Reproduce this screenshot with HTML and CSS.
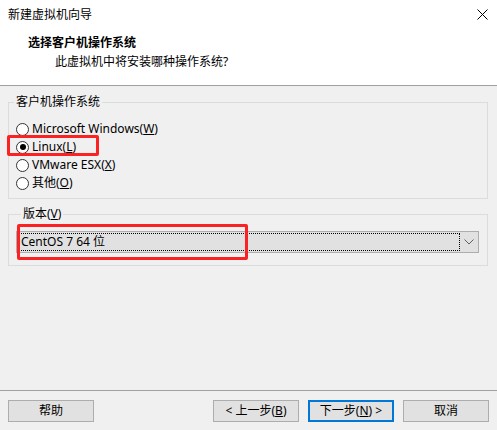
FILE: index.html
```html
<!DOCTYPE html>
<html lang="zh-CN">
<head>
    <meta charset="UTF-8">
    <title>新建虚拟机向导</title>
    <link rel="stylesheet" href="styles.css">
</head>
<body>

    <!-- Header -->
    <header class="header">
        <div class="titlebar">
            <span class="title">新建虚拟机向导</span>
            <svg class="close" width="11" height="11" viewBox="0 0 11 11">
                <path d="M0.5 0.5 L10.5 10.5 M10.5 0.5 L0.5 10.5" stroke="#000" stroke-width="1" fill="none"/>
            </svg>
        </div>
        <h1 class="heading">选择客户机操作系统</h1>
        <p class="subheading">此虚拟机中将安装哪种操作系统?</p>
    </header>

    <main class="content">
        <fieldset class="group os-group">
            <legend>客户机操作系统</legend>
            <div class="radio-row"><span class="radio"></span>Microsoft Windows(<u>W</u>)</div>
            <div class="radio-row marked"><span class="radio checked"></span>Linux(<u>L</u>)<span class="mark mark-linux"></span></div>
            <div class="radio-row"><span class="radio"></span>VMware ESX(<u>X</u>)</div>
            <div class="radio-row"><span class="radio"></span>其他(<u>O</u>)</div>
        </fieldset>

        <fieldset class="group version-group">
            <legend>版本(<u>V</u>)</legend>
            <div class="select">
                <div class="select-value">CentOS 7 64 位</div>
                <div class="select-arrow">
                    <svg width="10" height="6" viewBox="0 0 10 6">
                        <path d="M0.5 0.5 L5 5 L9.5 0.5" stroke="#606060" stroke-width="1" fill="none"/>
                    </svg>
                </div>
                <span class="mark mark-version"></span>
            </div>
        </fieldset>
    </main>

    <footer class="footer">
        <button class="btn">帮助</button>
        <div class="nav-buttons">
            <button class="btn">&lt; 上一步(<u>B</u>)</button>
            <button class="btn default">下一步(<u>N</u>) &gt;</button>
            <button class="btn">取消</button>
        </div>
    </footer>

</body>
</html>
```

FILE: styles.css
```css
html, body {
    margin: 0;
    padding: 0;
}

body {
    width: 497px;
    height: 430px;
    display: flex;
    flex-direction: column;
    background-color: #f0f0f0;
    font-family: "Noto Sans", "Noto Sans CJK SC", sans-serif;
    font-size: 12px;
    line-height: 16px;
    color: #000;
    overflow: hidden;
}

/* Header */
.header {
    height: 85px;
    background-color: #fff;
    border-bottom: 1px solid #a0a0a0;
}

.titlebar {
    height: 29px;
    display: flex;
    align-items: center;
    justify-content: space-between;
    padding: 0 9px 0 8px;
}

.close {
    display: block;
}

.heading {
    margin: 6px 0 0 28px;
    font-size: 12px;
    line-height: 16px;
    font-weight: bold;
}

.subheading {
    margin: 3px 0 0 55px;
}

/* Content */
.content {
    flex: 1;
    padding: 0 9px 0 8px;
}

.group {
    margin: 0;
    padding: 0;
    border: 1px solid #dcdcdc;
}

.group legend {
    margin-left: 5px;
    padding: 0 2px;
    line-height: 16px;
}

.os-group {
    margin-top: 8px;
    padding: 10px 0 6px 0;
}

.radio-row {
    position: relative;
    height: 18px;
    display: flex;
    align-items: center;
    padding-left: 7px;
}

.radio {
    width: 11px;
    height: 11px;
    border: 1px solid #333;
    border-radius: 50%;
    background-color: #fff;
    margin-right: 3px;
    display: flex;
    align-items: center;
    justify-content: center;
}

.radio.checked::after {
    content: "";
    width: 6px;
    height: 6px;
    border-radius: 50%;
    background-color: #000;
}

.version-group {
    margin-top: 7px;
    padding: 9px 8px 12px 7px;
}

.select {
    position: relative;
    height: 22px;
    box-sizing: border-box;
    display: flex;
    background-color: #e1e1e1;
    border: 1px solid #adadad;
}

.select-value {
    flex: 1;
    margin: 1px 0 1px 1px;
    padding-left: 2px;
    border: 1px dotted #000;
    line-height: 16px;
}

.select-arrow {
    width: 18px;
    display: flex;
    align-items: center;
    justify-content: center;
}

.select-arrow svg {
    display: block;
}

/* Red annotation boxes */
.mark {
    position: absolute;
    box-sizing: border-box;
    border: 3px solid #fa2222;
    border-radius: 2px;
}

.mark-linux {
    left: -2px;
    top: -3px;
    width: 92px;
    height: 21px;
}

.mark-version {
    left: 0;
    top: -8px;
    width: 231px;
    height: 36px;
}

/* Footer */
.footer {
    height: 40px;
    border-top: 1px solid #a0a0a0;
    display: flex;
    align-items: flex-start;
    padding: 9px 8px 0 8px;
    box-sizing: border-box;
}

.nav-buttons {
    margin-left: auto;
    display: flex;
    gap: 9px;
}

.btn {
    width: 86px;
    height: 22px;
    box-sizing: border-box;
    background-color: #e1e1e1;
    border: 1px solid #adadad;
    font-family: "Noto Sans", "Noto Sans CJK SC", sans-serif;
    font-size: 12px;
    line-height: 16px;
    color: #000;
    padding: 0;
}

.btn.default {
    border: 2px solid #0078d7;
}
```
